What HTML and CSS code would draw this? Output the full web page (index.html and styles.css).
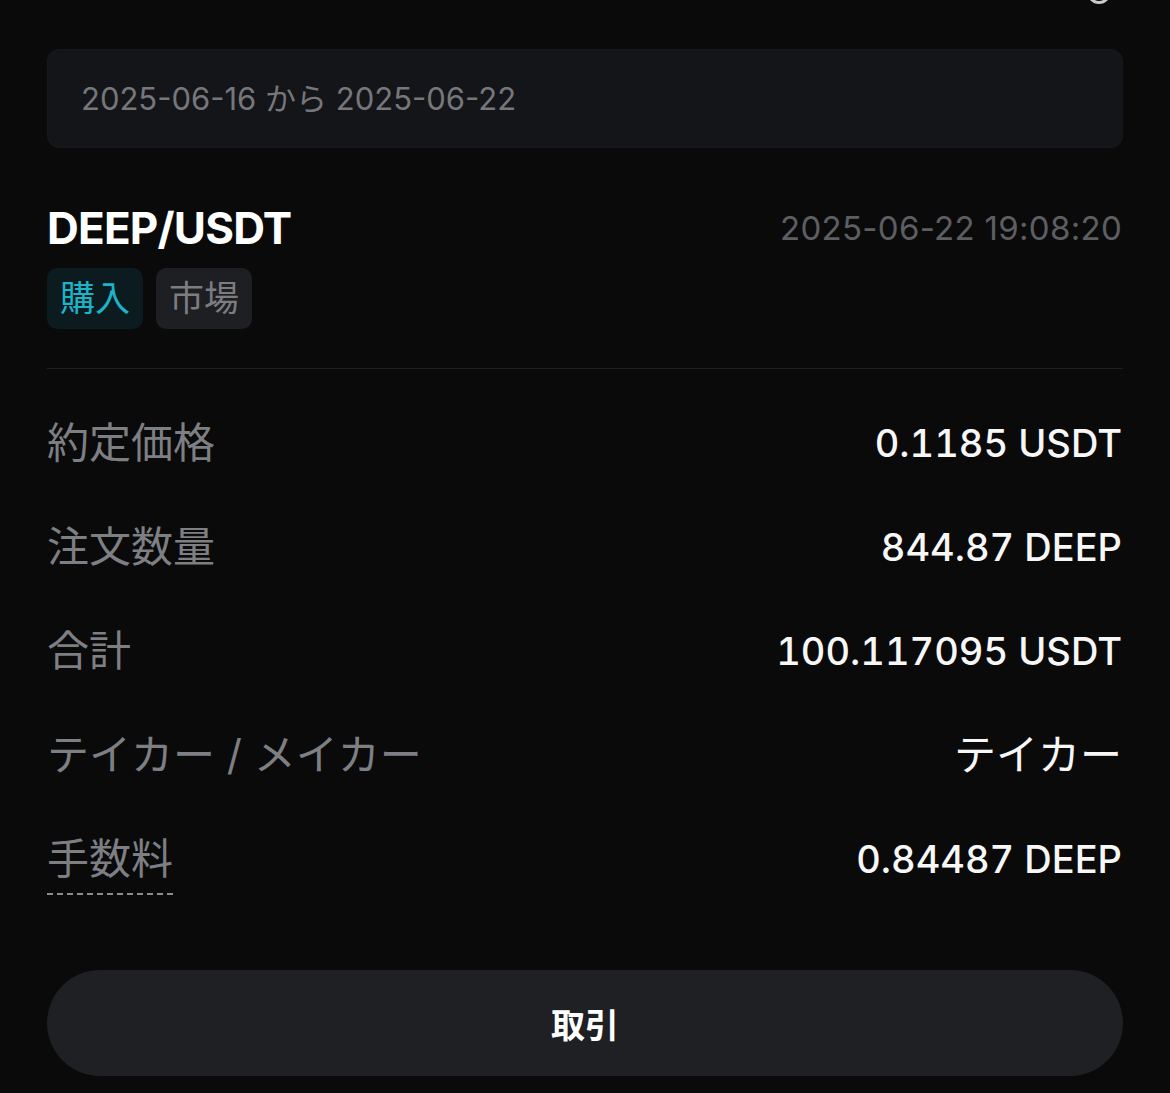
FILE: index.html
```html
<!DOCTYPE html>
<html lang="ja">
<head>
<meta charset="utf-8">
<title>取引詳細</title>
<link rel="stylesheet" href="styles.css">
</head>
<body>
<div class="page">
  <div class="topbar"><span class="ring"></span></div>
  <div class="date-box">2025-06-16 から 2025-06-22</div>
  <div class="header">
    <div class="pair">DEEP/USDT</div>
    <div class="time">2025-06-22 19:08:20</div>
  </div>
  <div class="tags">
    <span class="tag tag-buy">購入</span>
    <span class="tag tag-market">市場</span>
  </div>
  <div class="divider"></div>
  <div class="rows">
    <div class="row"><span class="label">約定価格</span><span class="value">0.1185 USDT</span></div>
    <div class="row"><span class="label">注文数量</span><span class="value">844.87 DEEP</span></div>
    <div class="row"><span class="label">合計</span><span class="value">100.117095 USDT</span></div>
    <div class="row"><span class="label">テイカー / メイカー</span><span class="value value-kana">テイカー</span></div>
    <div class="row"><span class="label label-dotted">手数料</span><span class="value">0.84487 DEEP</span></div>
  </div>
  <button class="trade-btn">取引</button>
</div>
</body>
</html>
```
FILE: styles.css
```css
html, body {
  margin: 0;
  padding: 0;
  background: #0a0a0b;
}
body {
  font-family: Inter, "Noto Sans CJK JP", sans-serif;
  color: #f5f5f5;
}
.page {
  padding: 0 47px;
}
.topbar {
  height: 4px;
  overflow: hidden;
  display: flex;
  justify-content: flex-end;
  align-items: flex-end;
  padding-right: 12px;
}
.ring {
  width: 18px;
  height: 18px;
  border: 3px solid #c9cacc;
  border-radius: 50%;
  flex: none;
}
.date-box {
  margin-top: 45px;
  height: 99px;
  box-sizing: border-box;
  border-radius: 12px;
  background: #141518;
  border: 1px solid #17181b;
  padding-left: 33px;
  padding-bottom: 5px;
  display: flex;
  align-items: center;
  font-size: 31px;
  color: #76777b;
}
.header {
  margin-top: 53px;
  display: flex;
  justify-content: space-between;
  align-items: center;
  line-height: 54px;
}
.pair {
  font-size: 44px;
  font-weight: 700;
  letter-spacing: -0.8px;
  color: #ffffff;
}
.time {
  font-size: 33px;
  letter-spacing: 0.3px;
  color: #5d5e62;
  margin-right: 1px;
}
.tags {
  margin-top: 13px;
  display: flex;
  gap: 13px;
}
.tag {
  height: 61px;
  line-height: 61px;
  padding: 0 13px;
  border-radius: 10px;
  font-size: 35px;
}
.tag-buy {
  background: #0b1b1f;
  color: #1db3c8;
}
.tag-market {
  background: #1e1f22;
  color: #7c7d81;
}
.divider {
  margin-top: 39px;
  height: 1px;
  background: #1d1e21;
}
.rows {
  margin-top: 22px;
}
.row {
  display: flex;
  justify-content: space-between;
  align-items: flex-start;
  padding: 27px 0;
  line-height: 50px;
}
.label {
  font-size: 42px;
  color: #7e7f83;
}
.label-dotted {
  display: inline-block;
  background-image: repeating-linear-gradient(to right, #8b8c90 0 6px, transparent 6px 10px);
  background-size: 100% 2px;
  background-position: left bottom;
  background-repeat: no-repeat;
  padding-bottom: 11px;
}
.value {
  font-size: 38px;
  font-weight: 500;
  font-variant-numeric: tabular-nums;
  color: #f7f7f7;
  margin-right: 1px;
}
.value-kana {
  font-size: 42px;
  font-weight: 400;
}
.trade-btn {
  display: block;
  width: 100%;
  margin-top: 48px;
  height: 106px;
  border: none;
  border-radius: 53px;
  background: #1f2024;
  color: #ffffff;
  font-family: Inter, "Noto Sans CJK JP", sans-serif;
  font-size: 34px;
  font-weight: 700;
}
```
